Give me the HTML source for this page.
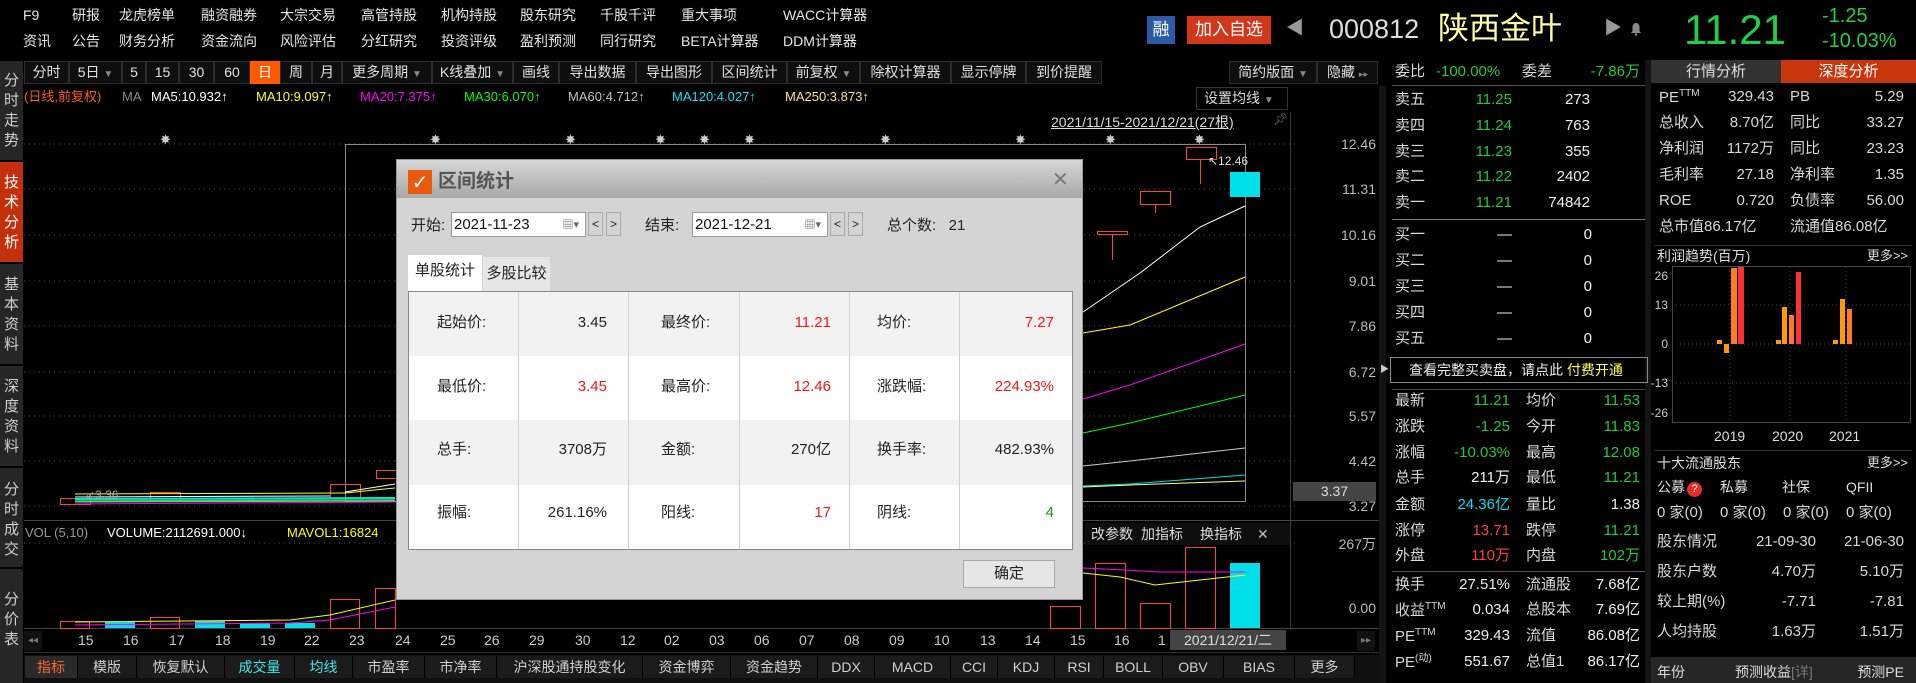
<!DOCTYPE html>
<html><head><meta charset="utf-8">
<style>
*{margin:0;padding:0;box-sizing:border-box}
body{width:1916px;height:683px;background:#000;overflow:hidden;position:relative;font-family:"Liberation Sans","Noto Sans CJK SC",sans-serif;color:#ddd}
.t{position:absolute;white-space:nowrap;line-height:1}
.m{font-size:14px;color:#e6e6e6}
.tb{position:absolute;top:61px;height:23px;background:#0e0e0e;border:1px solid #2c2c2c;font-size:14px;color:#e0e0e0;text-align:center;line-height:21px;white-space:nowrap}
.sb{position:absolute;left:0;width:23px;background:#262626;color:#cfcfcf;font-size:15px;text-align:center;line-height:20px}
.ob{font-size:15px}
.g{color:#22c93a}.r{color:#ff3c3c}.w{color:#eee}.l{color:#d8d8d8}.y{color:#ffff3a}.c{color:#00e0ea}
.bt{position:absolute;top:656px;height:22px;font-size:14px;color:#d0d0d0;text-align:center;line-height:22px;border-right:1px solid #000;background:#1b1b1b}
.dl{font-size:15px;color:#222}
</style></head><body>

<!-- top menus -->
<div class="t m" style="left:23px;top:8px">F9</div>
<div class="t m" style="left:72px;top:8px">研报</div>
<div class="t m" style="left:119px;top:8px">龙虎榜单</div>
<div class="t m" style="left:201px;top:8px">融资融券</div>
<div class="t m" style="left:280px;top:8px">大宗交易</div>
<div class="t m" style="left:361px;top:8px">高管持股</div>
<div class="t m" style="left:441px;top:8px">机构持股</div>
<div class="t m" style="left:520px;top:8px">股东研究</div>
<div class="t m" style="left:600px;top:8px">千股千评</div>
<div class="t m" style="left:681px;top:8px">重大事项</div>
<div class="t m" style="left:783px;top:8px">WACC计算器</div>
<div class="t m" style="left:23px;top:34px">资讯</div>
<div class="t m" style="left:72px;top:34px">公告</div>
<div class="t m" style="left:119px;top:34px">财务分析</div>
<div class="t m" style="left:201px;top:34px">资金流向</div>
<div class="t m" style="left:280px;top:34px">风险评估</div>
<div class="t m" style="left:361px;top:34px">分红研究</div>
<div class="t m" style="left:441px;top:34px">投资评级</div>
<div class="t m" style="left:520px;top:34px">盈利预测</div>
<div class="t m" style="left:600px;top:34px">同行研究</div>
<div class="t m" style="left:681px;top:34px">BETA计算器</div>
<div class="t m" style="left:783px;top:34px">DDM计算器</div>

<!-- stock header -->
<div style="position:absolute;left:1147px;top:16px;width:28px;height:28px;background:#2c5aa6;color:#fff;font-size:17px;text-align:center;line-height:28px">融</div>
<div style="position:absolute;left:1187px;top:16px;width:84px;height:28px;background:#d2371a;color:#fff;font-size:17px;text-align:center;line-height:28px">加入自选</div>
<div class="t" style="left:1286px;top:19px;font-size:18px;color:#999">◀</div>
<div class="t" style="left:1329px;top:16px;font-size:27px;color:#ddd">000812</div>
<div class="t" style="left:1438px;top:13px;font-size:31px;color:#ffffa0">陕西金叶</div>
<div class="t" style="left:1604px;top:19px;font-size:18px;color:#999">▶</div>
<svg style="position:absolute;left:1630px;top:22px" width="12" height="14" viewBox="0 0 12 14"><path d="M6 1C3.5 1 2.5 3 2.5 5.5V9L1 11H11L9.5 9V5.5C9.5 3 8.5 1 6 1Z" fill="#888"/><circle cx="6" cy="12.5" r="1.3" fill="#888"/></svg>
<div class="t g" style="left:1684px;top:9px;font-size:42px;color:#1fcf45">11.21</div>
<div class="t g" style="left:1822px;top:6px;font-size:20px;color:#1fcf45">-1.25</div>
<div class="t g" style="left:1822px;top:31px;font-size:20px;color:#1fcf45">-10.03%</div>

<!-- left sidebar -->
<div class="sb" style="top:61px;height:99px;padding-top:10px">分<br>时<br>走<br>势</div>
<div class="sb" style="top:162px;height:100px;padding-top:11px;background:#c4300c;color:#fff">技<br>术<br>分<br>析</div>
<div class="sb" style="top:264px;height:100px;padding-top:11px">基<br>本<br>资<br>料</div>
<div class="sb" style="top:366px;height:100px;padding-top:11px">深<br>度<br>资<br>料</div>
<div class="sb" style="top:468px;height:99px;padding-top:12px">分<br>时<br>成<br>交</div>
<div class="sb" style="top:569px;height:114px;padding-top:21px">分<br>价<br>表</div>

<!-- toolbar -->
<div class="tb" style="left:24px;width:45px">分时</div>
<div class="tb" style="left:69px;width:53px">5日 <span style="color:#888;font-size:10px">▼</span></div>
<div class="tb" style="left:122px;width:24px">5</div>
<div class="tb" style="left:146px;width:33px">15</div>
<div class="tb" style="left:179px;width:35px">30</div>
<div class="tb" style="left:214px;width:36px">60</div>
<div class="tb" style="left:250px;width:30px;background:#ff5a00;color:#fff;border-color:#ff5a00">日</div>
<div class="tb" style="left:280px;width:32px">周</div>
<div class="tb" style="left:312px;width:30px">月</div>
<div class="tb" style="left:342px;width:90px">更多周期 <span style="color:#888;font-size:10px">▼</span></div>
<div class="tb" style="left:432px;width:81px">K线叠加 <span style="color:#888;font-size:10px">▼</span></div>
<div class="tb" style="left:513px;width:46px">画线</div>
<div class="tb" style="left:559px;width:77px">导出数据</div>
<div class="tb" style="left:636px;width:76px">导出图形</div>
<div class="tb" style="left:712px;width:75px">区间统计</div>
<div class="tb" style="left:787px;width:73px">前复权 <span style="color:#888;font-size:10px">▼</span></div>
<div class="tb" style="left:860px;width:91px">除权计算器</div>
<div class="tb" style="left:951px;width:75px">显示停牌</div>
<div class="tb" style="left:1026px;width:76px">到价提醒</div>
<div class="tb" style="left:1229px;width:88px">简约版面 <span style="color:#888;font-size:10px">▼</span></div>
<div class="tb" style="left:1317px;width:61px">隐藏 <span style="color:#888;font-size:9px">▸▸</span></div>

<!-- MA legend -->
<div class="t" style="left:24px;top:90px;font-size:13px;color:#ff5a1a">(日线,前复权)</div>
<div class="t" style="left:122px;top:90px;font-size:13px;color:#888">MA</div>
<div class="t" style="left:151px;top:90px;font-size:13px;color:#fff">MA5:10.932↑</div>
<div class="t" style="left:256px;top:90px;font-size:13px;color:#ffff00">MA10:9.097↑</div>
<div class="t" style="left:360px;top:90px;font-size:13px;color:#ff00ff">MA20:7.375↑</div>
<div class="t" style="left:464px;top:90px;font-size:13px;color:#00ff00">MA30:6.070↑</div>
<div class="t" style="left:568px;top:90px;font-size:13px;color:#c0c0c0">MA60:4.712↑</div>
<div class="t" style="left:672px;top:90px;font-size:13px;color:#00e5ff">MA120:4.027↑</div>
<div class="t" style="left:785px;top:90px;font-size:13px;color:#ffe08a">MA250:3.873↑</div>
<div style="position:absolute;left:1196px;top:87px;width:92px;height:23px;border:1px solid #333;font-size:14px;color:#ddd;line-height:21px;padding-left:7px">设置均线 <span style="color:#888;font-size:10px">▼</span></div>
<div class="t" style="left:1051px;top:115px;font-size:14px;color:#ddd;text-decoration:underline">2021/11/15-2021/12/21(27根)</div>
<div class="t" style="left:1273px;top:113px;font-size:12px;color:#777">📌︎</div>

<svg width="1916" height="683" style="position:absolute;left:0;top:0">
<g stroke="#4a4a4a" stroke-dasharray="1 4">
<line x1="24" y1="144" x2="1298" y2="144"/><line x1="24" y1="189" x2="1298" y2="189"/><line x1="24" y1="235" x2="1298" y2="235"/><line x1="24" y1="281" x2="1298" y2="281"/><line x1="24" y1="326" x2="1298" y2="326"/><line x1="24" y1="372" x2="1298" y2="372"/><line x1="24" y1="416" x2="1298" y2="416"/><line x1="24" y1="461" x2="1298" y2="461"/><line x1="24" y1="506" x2="1298" y2="506"/>
<line x1="24" y1="543" x2="1298" y2="543"/>
</g>
<line x1="1290.5" y1="112" x2="1290.5" y2="630" stroke="#3a3a3a"/>
<line x1="24" y1="520.5" x2="1380" y2="520.5" stroke="#444"/>
<line x1="24" y1="628.5" x2="1380" y2="628.5" stroke="#444"/>
<line x1="24" y1="652.5" x2="1380" y2="652.5" stroke="#333"/>
<rect x="345.5" y="144.5" width="900" height="357" fill="none" stroke="#8a8a8a"/>
<g fill="#ccc" font-size="13" font-family="DejaVu Sans">
<text x="160" y="144">✸</text><text x="430" y="144">✸</text><text x="565" y="144">✸</text><text x="655" y="144">✸</text><text x="699" y="144">✸</text><text x="744" y="144">✸</text><text x="880" y="144">✸</text><text x="1015" y="144">✸</text><text x="1105" y="144">✸</text><text x="1194" y="144">✸</text>
</g>
<rect x="60.5" y="498.5" width="30" height="6" fill="none" stroke="#ff4040"/>
<rect x="150.5" y="492.5" width="30" height="8" fill="none" stroke="#ff4040"/>
<rect x="330.5" y="484.5" width="30" height="14" fill="none" stroke="#ff4040"/>
<rect x="376.5" y="470.5" width="20" height="8" fill="none" stroke="#ff4040"/>
<line x1="75" y1="494" x2="345" y2="493" stroke="#ffff00"/>
<polyline points="345,493 395,488" stroke="#ffff00" fill="none"/>
<line x1="75" y1="497" x2="330" y2="496" stroke="#fff"/>
<polyline points="345,492 395,484" stroke="#fff" fill="none"/>
<line x1="75" y1="499" x2="395" y2="498" stroke="#00e0ea" stroke-width="2"/>
<line x1="75" y1="501" x2="395" y2="500" stroke="#00ff00" stroke-width="1.5"/>
<line x1="75" y1="504" x2="395" y2="502" stroke="#ff00ff"/>
<line x1="75" y1="502" x2="395" y2="501" stroke="#aaa"/>
<text x="85" y="499" fill="#aaa" font-size="12" font-family="Liberation Sans">↙3.36</text>
<rect x="1097.5" y="231.5" width="30" height="3" fill="none" stroke="#ff4040"/><line x1="1112.5" y1="235" x2="1112.5" y2="260" stroke="#ff4040"/>
<rect x="1140.5" y="191.5" width="30" height="13" fill="none" stroke="#ff4040"/><line x1="1155.5" y1="205" x2="1155.5" y2="213" stroke="#ff4040"/>
<rect x="1186.5" y="147.5" width="30" height="12" fill="none" stroke="#ff4040"/><line x1="1200.5" y1="160" x2="1200.5" y2="184" stroke="#ff4040"/>
<rect x="1230" y="172" width="30" height="25" fill="#00e0ea"/>
<text x="1208" y="165" fill="#ddd" font-size="12" font-family="Liberation Sans">↖12.46</text>
<polyline points="1083,312 1140,273 1200,227 1245,206" stroke="#fff" fill="none"/>
<polyline points="1083,333 1130,325 1245,277" stroke="#ffff00" fill="none"/>
<polyline points="1083,399 1130,385 1245,344" stroke="#ff00ff" fill="none"/>
<polyline points="1083,433 1130,423 1245,395" stroke="#00ff00" fill="none"/>
<polyline points="1083,466 1130,461 1245,448" stroke="#ccc" fill="none"/>
<polyline points="1083,486 1130,484 1245,475" stroke="#00e0ea" fill="none"/>
<polyline points="1083,487 1130,485 1245,481" stroke="#ffff80" fill="none"/>
<rect x="60.5" y="621.5" width="29" height="7" fill="none" stroke="#ff4040"/>
<rect x="105" y="622" width="30" height="6" fill="#00e0ea"/>
<rect x="150.5" y="617.5" width="29" height="11" fill="none" stroke="#ff4040"/>
<rect x="195" y="621" width="30" height="7" fill="#00e0ea"/>
<rect x="240" y="623" width="30" height="5" fill="#00e0ea"/>
<rect x="285" y="623" width="30" height="5" fill="#00e0ea"/>
<rect x="330.5" y="599.5" width="29" height="29" fill="none" stroke="#ff4040"/>
<rect x="375.5" y="588.5" width="20" height="40" fill="none" stroke="#ff4040"/>
<polyline points="75,622 290,620 330,615 395,600" stroke="#ffff00" fill="none"/>
<polyline points="75,625 290,623 330,620 395,607" stroke="#ff00ff" fill="none"/>
<rect x="1050.5" y="606.5" width="30" height="22" fill="none" stroke="#ff4040"/>
<rect x="1095.5" y="563.5" width="30" height="65" fill="none" stroke="#ff4040"/>
<rect x="1140.5" y="603.5" width="30" height="25" fill="none" stroke="#ff4040"/>
<rect x="1185.5" y="547.5" width="30" height="81" fill="none" stroke="#ff4040"/>
<rect x="1230" y="563" width="30" height="65" fill="#00e0ea"/>
<polyline points="1083,568 1125,570 1160,572 1245,572" stroke="#ff00ff" fill="none"/>
<polyline points="1083,573 1120,577 1155,585 1200,580 1245,575" stroke="#ffff00" fill="none"/>
<g stroke="#444" stroke-dasharray="1 3">
<line x1="1672" y1="305" x2="1910" y2="305"/><line x1="1672" y1="344" x2="1910" y2="344"/><line x1="1672" y1="383" x2="1910" y2="383"/>
<line x1="1730" y1="267" x2="1730" y2="422"/><line x1="1790" y1="267" x2="1790" y2="422"/><line x1="1846" y1="267" x2="1846" y2="422"/>
</g>
<rect x="1672.5" y="266.5" width="238" height="156" fill="none" stroke="#444"/>
<rect x="1717" y="340" width="5" height="4" fill="#ff9a00"/><rect x="1724" y="344" width="5" height="9" fill="#ff9a00"/>
<rect x="1731" y="268" width="6" height="76" fill="#ff7a20"/><rect x="1738" y="267" width="6" height="77" fill="#ff3030"/>
<rect x="1776" y="340" width="5" height="4" fill="#ff9a00"/><rect x="1782" y="307" width="5" height="37" fill="#ff9a00"/><rect x="1789" y="315" width="5" height="29" fill="#ff7a20"/><rect x="1796" y="272" width="5" height="72" fill="#ff3030"/>
<rect x="1833" y="340" width="5" height="4" fill="#ff9a00"/><rect x="1840" y="299" width="5" height="45" fill="#ff9a00"/><rect x="1847" y="309" width="5" height="35" fill="#ff7a20"/>
<rect x="1379" y="86" width="7" height="597" fill="#141414"/>
<line x1="1392" y1="85.5" x2="1645" y2="85.5" stroke="#555"/>
<line x1="1392" y1="219.5" x2="1645" y2="219.5" stroke="#777"/>
<line x1="1392" y1="389.5" x2="1645" y2="389.5" stroke="#444"/>
<line x1="1392" y1="571.5" x2="1645" y2="571.5" stroke="#555"/>
<rect x="1645" y="60" width="6" height="623" fill="#141414"/>
<line x1="1655" y1="245.5" x2="1912" y2="245.5" stroke="#333"/>
<line x1="1655" y1="450.5" x2="1912" y2="450.5" stroke="#333"/>
</svg>

<!-- price axis -->
<div class="t" style="right:540px;top:137px;font-size:14px;color:#bbb">12.46</div>
<div class="t" style="right:540px;top:182px;font-size:14px;color:#bbb">11.31</div>
<div class="t" style="right:540px;top:228px;font-size:14px;color:#bbb">10.16</div>
<div class="t" style="right:540px;top:274px;font-size:14px;color:#bbb">9.01</div>
<div class="t" style="right:540px;top:319px;font-size:14px;color:#bbb">7.86</div>
<div class="t" style="right:540px;top:365px;font-size:14px;color:#bbb">6.72</div>
<div class="t" style="right:540px;top:409px;font-size:14px;color:#bbb">5.57</div>
<div class="t" style="right:540px;top:454px;font-size:14px;color:#bbb">4.42</div>
<div class="t" style="right:540px;top:499px;font-size:14px;color:#bbb">3.27</div>
<div style="position:absolute;left:1293px;top:482px;width:83px;height:19px;background:#444;color:#ddd;font-size:14px;line-height:19px;text-align:center">3.37</div>
<div class="t" style="right:540px;top:537px;font-size:14px;color:#bbb">267万</div>
<div class="t" style="right:540px;top:601px;font-size:14px;color:#bbb">0.00</div>

<!-- vol header -->
<div class="t" style="left:25px;top:526px;font-size:13px;color:#999">VOL (5,10)</div>
<div class="t" style="left:107px;top:526px;font-size:13px;color:#fff">VOLUME:2112691.000↓</div>
<div class="t" style="left:287px;top:526px;font-size:13px;color:#ffff00">MAVOL1:16824</div>
<div style="position:absolute;left:1085px;top:523px;width:205px;height:22px;background:#0e0e0e;font-size:14px;color:#ddd;line-height:22px">
<span style="position:absolute;left:6px">改参数</span><span style="position:absolute;left:56px">加指标</span><span style="position:absolute;left:115px">换指标</span><span style="position:absolute;left:172px;color:#bbb">✕</span></div>

<!-- x axis dates -->
<div style="position:absolute;left:24px;top:631px;width:18px;height:20px;background:#111;color:#777;font-size:10px;line-height:20px;text-align:center">◂◂</div>
<div class="t" style="top:633px;left:78px;font-size:14px;color:#ccc">15</div>
<div class="t" style="top:633px;left:123px;font-size:14px;color:#ccc">16</div>
<div class="t" style="top:633px;left:169px;font-size:14px;color:#ccc">17</div>
<div class="t" style="top:633px;left:215px;font-size:14px;color:#ccc">18</div>
<div class="t" style="top:633px;left:260px;font-size:14px;color:#ccc">19</div>
<div class="t" style="top:633px;left:304px;font-size:14px;color:#ccc">22</div>
<div class="t" style="top:633px;left:349px;font-size:14px;color:#ccc">23</div>
<div class="t" style="top:633px;left:395px;font-size:14px;color:#ccc">24</div>
<div class="t" style="top:633px;left:440px;font-size:14px;color:#ccc">25</div>
<div class="t" style="top:633px;left:484px;font-size:14px;color:#ccc">26</div>
<div class="t" style="top:633px;left:529px;font-size:14px;color:#ccc">29</div>
<div class="t" style="top:633px;left:575px;font-size:14px;color:#ccc">30</div>
<div class="t" style="top:633px;left:620px;font-size:14px;color:#ccc">12</div>
<div class="t" style="top:633px;left:664px;font-size:14px;color:#ccc">02</div>
<div class="t" style="top:633px;left:709px;font-size:14px;color:#ccc">03</div>
<div class="t" style="top:633px;left:754px;font-size:14px;color:#ccc">06</div>
<div class="t" style="top:633px;left:799px;font-size:14px;color:#ccc">07</div>
<div class="t" style="top:633px;left:844px;font-size:14px;color:#ccc">08</div>
<div class="t" style="top:633px;left:889px;font-size:14px;color:#ccc">09</div>
<div class="t" style="top:633px;left:934px;font-size:14px;color:#ccc">10</div>
<div class="t" style="top:633px;left:980px;font-size:14px;color:#ccc">13</div>
<div class="t" style="top:633px;left:1025px;font-size:14px;color:#ccc">14</div>
<div class="t" style="top:633px;left:1070px;font-size:14px;color:#ccc">15</div>
<div class="t" style="top:633px;left:1114px;font-size:14px;color:#ccc">16</div>
<div class="t" style="top:633px;left:1158px;font-size:14px;color:#ccc">1</div>
<div style="position:absolute;left:1170px;top:630px;width:116px;height:20px;background:#444;color:#ddd;font-size:14px;line-height:20px;text-align:center">2021/12/21/二</div>
<div style="position:absolute;left:1357px;top:631px;width:18px;height:20px;background:#111;color:#777;font-size:10px;line-height:20px;text-align:center">▸▸</div>

<!-- bottom tabs -->
<div style="position:absolute;left:24px;top:655px;width:1356px;height:28px;background:#101010"></div>
<div class="bt" style="left:25px;width:53px;color:#ff6a2a;background:#2a2a2a">指标</div>
<div class="bt" style="left:78px;width:59px">模版</div>
<div class="bt" style="left:137px;width:88px">恢复默认</div>
<div class="bt" style="left:225px;width:70px;color:#3fe8ea">成交量</div>
<div class="bt" style="left:295px;width:58px;color:#3fe8ea">均线</div>
<div class="bt" style="left:353px;width:72px">市盈率</div>
<div class="bt" style="left:425px;width:72px">市净率</div>
<div class="bt" style="left:497px;width:146px">沪深股通持股变化</div>
<div class="bt" style="left:643px;width:88px">资金博弈</div>
<div class="bt" style="left:731px;width:87px">资金趋势</div>
<div class="bt" style="left:818px;width:57px">DDX</div>
<div class="bt" style="left:875px;width:76px">MACD</div>
<div class="bt" style="left:951px;width:47px">CCI</div>
<div class="bt" style="left:998px;width:57px">KDJ</div>
<div class="bt" style="left:1055px;width:49px">RSI</div>
<div class="bt" style="left:1104px;width:59px">BOLL</div>
<div class="bt" style="left:1163px;width:61px">OBV</div>
<div class="bt" style="left:1224px;width:71px">BIAS</div>
<div class="bt" style="left:1295px;width:60px">更多</div>

<!-- order book -->
<div class="t ob l" style="left:1395px;top:64px">委比</div>
<div class="t ob g" style="left:1436px;top:64px">-100.00%</div>
<div class="t ob l" style="left:1522px;top:64px">委差</div>
<div class="t ob g" style="right:276px;top:64px">-7.86万</div>

<div class="t ob l" style="left:1395px;top:92px">卖五</div><div class="t ob g" style="right:404px;top:92px">11.25</div><div class="t ob w" style="right:326px;top:92px">273</div>
<div class="t ob l" style="left:1395px;top:118px">卖四</div><div class="t ob g" style="right:404px;top:118px">11.24</div><div class="t ob w" style="right:326px;top:118px">763</div>
<div class="t ob l" style="left:1395px;top:144px">卖三</div><div class="t ob g" style="right:404px;top:144px">11.23</div><div class="t ob w" style="right:326px;top:144px">355</div>
<div class="t ob l" style="left:1395px;top:169px">卖二</div><div class="t ob g" style="right:404px;top:169px">11.22</div><div class="t ob w" style="right:326px;top:169px">2402</div>
<div class="t ob l" style="left:1395px;top:195px">卖一</div><div class="t ob g" style="right:404px;top:195px">11.21</div><div class="t ob w" style="right:326px;top:195px">74842</div>

<div class="t ob l" style="left:1395px;top:227px">买一</div><div class="t ob w" style="left:1497px;top:227px">—</div><div class="t ob w" style="right:324px;top:227px">0</div>
<div class="t ob l" style="left:1395px;top:253px">买二</div><div class="t ob w" style="left:1497px;top:253px">—</div><div class="t ob w" style="right:324px;top:253px">0</div>
<div class="t ob l" style="left:1395px;top:279px">买三</div><div class="t ob w" style="left:1497px;top:279px">—</div><div class="t ob w" style="right:324px;top:279px">0</div>
<div class="t ob l" style="left:1395px;top:305px">买四</div><div class="t ob w" style="left:1497px;top:305px">—</div><div class="t ob w" style="right:324px;top:305px">0</div>
<div class="t ob l" style="left:1395px;top:331px">买五</div><div class="t ob w" style="left:1497px;top:331px">—</div><div class="t ob w" style="right:324px;top:331px">0</div>

<div style="position:absolute;left:1390px;top:357px;width:258px;height:26px;border:1px solid #8a8a8a;font-size:14px;color:#eee;line-height:24px;padding-left:18px">查看完整买卖盘，请点此 <span style="color:#ffff50">付费开通</span></div>
<div class="t" style="left:1380px;top:365px;font-size:9px;color:#ccc">▶</div>

<div class="t ob l" style="left:1395px;top:393px">最新</div><div class="t ob g" style="right:406px;top:393px">11.21</div><div class="t ob l" style="left:1526px;top:393px">均价</div><div class="t ob g" style="right:276px;top:393px">11.53</div>
<div class="t ob l" style="left:1395px;top:419px">涨跌</div><div class="t ob g" style="right:406px;top:419px">-1.25</div><div class="t ob l" style="left:1526px;top:419px">今开</div><div class="t ob g" style="right:276px;top:419px">11.83</div>
<div class="t ob l" style="left:1395px;top:445px">涨幅</div><div class="t ob g" style="right:406px;top:445px">-10.03%</div><div class="t ob l" style="left:1526px;top:445px">最高</div><div class="t ob g" style="right:276px;top:445px">12.08</div>
<div class="t ob l" style="left:1395px;top:470px">总手</div><div class="t ob w" style="right:406px;top:470px">211万</div><div class="t ob l" style="left:1526px;top:470px">最低</div><div class="t ob g" style="right:276px;top:470px">11.21</div>
<div class="t ob l" style="left:1395px;top:497px">金额</div><div class="t ob c" style="right:406px;top:497px">24.36亿</div><div class="t ob l" style="left:1526px;top:497px">量比</div><div class="t ob w" style="right:276px;top:497px">1.38</div>
<div class="t ob l" style="left:1395px;top:523px">涨停</div><div class="t ob r" style="right:406px;top:523px">13.71</div><div class="t ob l" style="left:1526px;top:523px">跌停</div><div class="t ob g" style="right:276px;top:523px">11.21</div>
<div class="t ob l" style="left:1395px;top:548px">外盘</div><div class="t ob r" style="right:406px;top:548px">110万</div><div class="t ob l" style="left:1526px;top:548px">内盘</div><div class="t ob g" style="right:276px;top:548px">102万</div>

<div class="t ob l" style="left:1395px;top:577px">换手</div><div class="t ob w" style="right:406px;top:577px">27.51%</div><div class="t ob l" style="left:1526px;top:577px">流通股</div><div class="t ob w" style="right:276px;top:577px">7.68亿</div>
<div class="t ob l" style="left:1395px;top:602px">收益<sup style="font-size:10px">TTM</sup></div><div class="t ob w" style="right:406px;top:602px">0.034</div><div class="t ob l" style="left:1526px;top:602px">总股本</div><div class="t ob w" style="right:276px;top:602px">7.69亿</div>
<div class="t ob l" style="left:1395px;top:628px">PE<sup style="font-size:10px">TTM</sup></div><div class="t ob w" style="right:406px;top:628px">329.43</div><div class="t ob l" style="left:1526px;top:628px">流值</div><div class="t ob w" style="right:276px;top:628px">86.08亿</div>
<div class="t ob l" style="left:1395px;top:654px">PE<sup style="font-size:10px">(动)</sup></div><div class="t ob w" style="right:406px;top:654px">551.67</div><div class="t ob l" style="left:1526px;top:654px">总值1</div><div class="t ob w" style="right:276px;top:654px">86.17亿</div>

<!-- right panel -->
<div style="position:absolute;left:1651px;top:60px;width:130px;height:23px;background:#333;color:#ddd;font-size:15px;text-align:center;line-height:23px">行情分析</div>
<div style="position:absolute;left:1781px;top:60px;width:135px;height:23px;background:#c8360e;color:#fff;font-size:15px;text-align:center;line-height:23px">深度分析</div>
<div class="t ob l" style="left:1659px;top:89px">PE<sup style="font-size:10px">TTM</sup></div><div class="t ob l" style="right:142px;top:89px">329.43</div><div class="t ob l" style="left:1790px;top:89px">PB</div><div class="t ob l" style="right:12px;top:89px">5.29</div>
<div class="t ob l" style="left:1659px;top:115px">总收入</div><div class="t ob l" style="right:142px;top:115px">8.70亿</div><div class="t ob l" style="left:1790px;top:115px">同比</div><div class="t ob l" style="right:12px;top:115px">33.27</div>
<div class="t ob l" style="left:1659px;top:141px">净利润</div><div class="t ob l" style="right:142px;top:141px">1172万</div><div class="t ob l" style="left:1790px;top:141px">同比</div><div class="t ob l" style="right:12px;top:141px">23.23</div>
<div class="t ob l" style="left:1659px;top:167px">毛利率</div><div class="t ob l" style="right:142px;top:167px">27.18</div><div class="t ob l" style="left:1790px;top:167px">净利率</div><div class="t ob l" style="right:12px;top:167px">1.35</div>
<div class="t ob l" style="left:1659px;top:193px">ROE</div><div class="t ob l" style="right:142px;top:193px">0.720</div><div class="t ob l" style="left:1790px;top:193px">负债率</div><div class="t ob l" style="right:12px;top:193px">56.00</div>
<div class="t ob l" style="left:1659px;top:219px">总市值86.17亿</div><div class="t ob l" style="left:1790px;top:219px">流通值86.08亿</div>
<div class="t" style="left:1657px;top:249px;font-size:14px;color:#ddd">利润趋势(百万)</div>
<div class="t" style="right:8px;top:249px;font-size:13px;color:#ddd">更多&gt;&gt;</div>
<div class="t" style="right:248px;top:270px;font-size:12px;color:#ccc">26</div>
<div class="t" style="right:248px;top:299px;font-size:12px;color:#ccc">13</div>
<div class="t" style="right:248px;top:338px;font-size:12px;color:#ccc">0</div>
<div class="t" style="right:248px;top:377px;font-size:12px;color:#ccc">-13</div>
<div class="t" style="right:248px;top:407px;font-size:12px;color:#ccc">-26</div>
<div class="t" style="left:1714px;top:429px;font-size:14px;color:#ddd">2019</div>
<div class="t" style="left:1772px;top:429px;font-size:14px;color:#ddd">2020</div>
<div class="t" style="left:1829px;top:429px;font-size:14px;color:#ddd">2021</div>
<div class="t" style="left:1657px;top:456px;font-size:14px;color:#ddd">十大流通股东</div>
<div class="t" style="right:8px;top:456px;font-size:13px;color:#ddd">更多&gt;&gt;</div>
<div class="t" style="left:1657px;top:480px;font-size:14px;color:#ddd">公募<span style="display:inline-block;width:15px;height:15px;border-radius:50%;background:#e52b2b;color:#fff;font-size:11px;text-align:center;line-height:15px;margin-left:2px">?</span></div>
<div class="t" style="left:1720px;top:480px;font-size:14px;color:#ddd">私募</div>
<div class="t" style="left:1782px;top:480px;font-size:14px;color:#ddd">社保</div>
<div class="t" style="left:1846px;top:480px;font-size:14px;color:#ddd">QFII</div>
<div class="t ob l" style="left:1657px;top:505px">0 家(0)</div>
<div class="t ob l" style="left:1720px;top:505px">0 家(0)</div>
<div class="t ob l" style="left:1783px;top:505px">0 家(0)</div>
<div class="t ob l" style="left:1846px;top:505px">0 家(0)</div>
<div class="t ob l" style="left:1657px;top:534px">股东情况</div><div class="t ob l" style="right:100px;top:534px">21-09-30</div><div class="t ob l" style="right:12px;top:534px">21-06-30</div>
<div class="t ob l" style="left:1657px;top:564px">股东户数</div><div class="t ob l" style="right:100px;top:564px">4.70万</div><div class="t ob l" style="right:12px;top:564px">5.10万</div>
<div class="t ob l" style="left:1657px;top:594px">较上期(%)</div><div class="t ob l" style="right:100px;top:594px">-7.71</div><div class="t ob l" style="right:12px;top:594px">-7.81</div>
<div class="t ob l" style="left:1657px;top:624px">人均持股</div><div class="t ob l" style="right:100px;top:624px">1.63万</div><div class="t ob l" style="right:12px;top:624px">1.51万</div>
<div style="position:absolute;left:1651px;top:657px;width:265px;height:26px;background:#262626"></div>
<div class="t" style="left:1657px;top:665px;font-size:14px;color:#ddd">年份</div>
<div class="t" style="left:1735px;top:665px;font-size:14px;color:#ddd">预测收益<span style="color:#777">[详]</span></div>
<div class="t" style="right:12px;top:665px;font-size:14px;color:#ddd">预测PE</div>

<!-- dialog -->
<div style="position:absolute;left:396px;top:159px;width:687px;height:441px;background:#d4d4d4;border:1px solid #999">
 <div style="position:absolute;left:0;top:0;width:685px;height:38px;background:linear-gradient(#d6d6d6,#a8a8a8)"></div>
 <div style="position:absolute;left:11px;top:10px;width:24px;height:24px;background:#ea5a0c;color:#fff;font-size:20px;line-height:24px;text-align:center;font-family:'DejaVu Sans'">✓</div>
 <div class="t" style="left:41px;top:12px;font-size:19px;color:#555;font-weight:bold">区间统计</div>
 <div class="t" style="left:655px;top:10px;font-size:20px;color:#777">✕</div>

 <div class="t dl" style="left:14px;top:58px">开始:</div>
 <div style="position:absolute;left:54px;top:52px;width:135px;height:25px;background:#fff;border:1px solid #999;font-size:15px;color:#111;line-height:23px;padding-left:2px">2021-11-23<span style="position:absolute;right:6px;top:1px;font-size:11px;color:#667">▦▾</span></div>
 <div style="position:absolute;left:191px;top:52px;width:15px;height:24px;border:1px solid #aaa;font-size:12px;line-height:22px;text-align:center;color:#222">&lt;</div>
 <div style="position:absolute;left:209px;top:52px;width:15px;height:24px;border:1px solid #aaa;font-size:12px;line-height:22px;text-align:center;color:#222">&gt;</div>
 <div class="t dl" style="left:248px;top:58px">结束:</div>
 <div style="position:absolute;left:295px;top:52px;width:136px;height:25px;background:#fff;border:1px solid #999;font-size:15px;color:#111;line-height:23px;padding-left:2px">2021-12-21<span style="position:absolute;right:6px;top:1px;font-size:11px;color:#667">▦▾</span></div>
 <div style="position:absolute;left:433px;top:52px;width:15px;height:24px;border:1px solid #aaa;font-size:12px;line-height:22px;text-align:center;color:#222">&lt;</div>
 <div style="position:absolute;left:451px;top:52px;width:15px;height:24px;border:1px solid #aaa;font-size:12px;line-height:22px;text-align:center;color:#222">&gt;</div>
 <div class="t dl" style="left:490px;top:58px">总个数:&nbsp;&nbsp;&nbsp;21</div>

 <div style="position:absolute;left:11px;top:95px;width:74px;height:36px;background:#fff;font-size:15px;color:#222;text-align:center;line-height:32px">单股统计</div>
 <div style="position:absolute;left:86px;top:97px;width:67px;height:34px;background:#e6e6e6;font-size:15px;color:#222;text-align:center;line-height:34px">多股比较</div>

 <div style="position:absolute;left:11px;top:131px;width:665px;height:259px;border:1px solid #888;background:#fff">
  <div style="position:absolute;left:0;top:0;width:663px;height:64px;background:#f2f2f2"></div>
  <div style="position:absolute;left:0;top:128px;width:663px;height:65px;background:#f2f2f2"></div>
  <div style="position:absolute;left:109px;top:0;width:1px;height:257px;background:#d0d0d0"></div>
  <div style="position:absolute;left:219px;top:0;width:1px;height:257px;background:#d0d0d0"></div>
  <div style="position:absolute;left:330px;top:0;width:1px;height:257px;background:#d0d0d0"></div>
  <div style="position:absolute;left:440px;top:0;width:1px;height:257px;background:#d0d0d0"></div>
  <div style="position:absolute;left:550px;top:0;width:1px;height:257px;background:#d0d0d0"></div>
 </div>
</div>
<div class="t dl" style="left:437px;top:315px">起始价:</div><div class="t dl" style="right:1309px;top:315px">3.45</div>
<div class="t dl" style="left:661px;top:315px">最终价:</div><div class="t dl" style="right:1085px;top:315px;color:#f01818">11.21</div>
<div class="t dl" style="left:877px;top:315px">均价:</div><div class="t dl" style="right:862px;top:315px;color:#f01818">7.27</div>
<div class="t dl" style="left:437px;top:379px">最低价:</div><div class="t dl" style="right:1309px;top:379px;color:#f01818">3.45</div>
<div class="t dl" style="left:661px;top:379px">最高价:</div><div class="t dl" style="right:1085px;top:379px;color:#f01818">12.46</div>
<div class="t dl" style="left:877px;top:379px">涨跌幅:</div><div class="t dl" style="right:862px;top:379px;color:#f01818">224.93%</div>
<div class="t dl" style="left:437px;top:442px">总手:</div><div class="t dl" style="right:1309px;top:442px">3708万</div>
<div class="t dl" style="left:661px;top:442px">金额:</div><div class="t dl" style="right:1085px;top:442px">270亿</div>
<div class="t dl" style="left:877px;top:442px">换手率:</div><div class="t dl" style="right:862px;top:442px">482.93%</div>
<div class="t dl" style="left:437px;top:505px">振幅:</div><div class="t dl" style="right:1309px;top:505px">261.16%</div>
<div class="t dl" style="left:661px;top:505px">阳线:</div><div class="t dl" style="right:1085px;top:505px;color:#f01818">17</div>
<div class="t dl" style="left:877px;top:505px">阴线:</div><div class="t dl" style="right:862px;top:505px;color:#1a9a1a">4</div>
<div style="position:absolute;left:963px;top:560px;width:92px;height:28px;background:#e6e6e6;border:1px solid #aaa;font-size:15px;color:#222;text-align:center;line-height:26px">确定</div>

</body></html>
